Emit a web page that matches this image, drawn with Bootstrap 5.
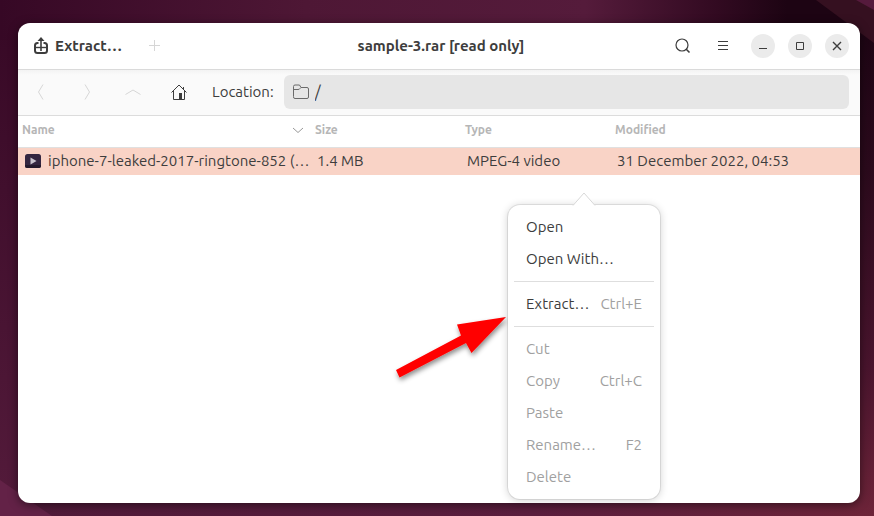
<!DOCTYPE html>
<html lang="en">
<head>
<meta charset="utf-8">
<meta name="viewport" content="width=device-width, initial-scale=1">
<title>sample-3.rar [read only]</title>
<link href="https://cdn.jsdelivr.net/npm/bootstrap@5.3.0/dist/css/bootstrap.min.css" rel="stylesheet">
<style>
body{font-family:Ubuntu,"Noto Sans","Open Sans",sans-serif;font-size:15px;line-height:20px;color:#3d3d3d;background:#3f1029}
.desktop{isolation:isolate;padding:23px 14px 13px 18px}
.wallpaper{z-index:-1}
.app-window{background:#fff;border-radius:12px;box-shadow:0 2px 10px rgba(0,0,0,.5)}
.title-bar{height:47px;border-bottom:1px solid #dadada;padding:0 11px 0 15px}
.title-bar h1{font-size:15px}
.side{flex:1 1 0}
.path-bar{height:46px;background:linear-gradient(#f3f3f3,#fafafa 5px);border-bottom:1px solid #dcdcdc;padding:0 11px 2px 0}
.tool{background:none;border:0;padding:0;color:inherit;display:flex;align-items:center;justify-content:center;flex:none}
.tool:disabled{color:#d6d6d6}
.tool-nav{width:46px;height:34px}
.tool-extract{gap:6px}
.tool-add{margin-left:27px}
.tool-menu{margin:0 22px 0 26px}
.rounds{gap:13px}
.tool-round{width:24px;height:24px;border-radius:50%;background:#ebebeb}
.place-label{margin:0 10px}
.location{background:#e6e6e6;border-radius:6px;height:34px;padding:0 9px;color:#6a6a6a;gap:6px}
.location input{background:none;border:0;outline:0;padding:0;color:#3d3d3d;min-width:0;font-size:16px}
.files{table-layout:fixed;width:100%}
.files th{height:31px;padding:0 4px 2px;font-size:12px;line-height:16px;font-weight:700;color:#b6b6b6;border-bottom:1px solid #e0e0e0}
.files td{height:28px;padding:0 6px;background:#f9d3c6;white-space:nowrap}
.file-name{gap:7px}
.col-file{width:293px}
.col-std{width:150px}
.menu-pop{left:508px;top:205px;width:152px;background:#fff;border-radius:12px;padding:6px;box-shadow:0 0 0 1px rgba(0,0,0,.08),0 1px 8px rgba(0,0,0,.2)}
.menu-tip{left:64px;top:-13px}
.entry{background:none;border:0;width:100%;height:32px;padding:0 12px;color:inherit;display:flex;align-items:center;justify-content:space-between;text-align:left}
.entry:disabled,.keys{color:#a0a0a0}
.menu-line{height:1px;background:#dedede;margin:6px 0}
.pointer{left:385px;top:305px}
</style>
<script src="https://cdn.jsdelivr.net/npm/bootstrap@5.3.0/dist/js/bootstrap.bundle.min.js"></script>
</head>
<body>
<div class="desktop position-relative min-vh-100 d-flex">
<svg class="wallpaper position-absolute top-0 start-0 w-100 h-100" viewBox="0 0 874 516" preserveAspectRatio="none" aria-hidden="true">
<defs>
<linearGradient id="base" x2="0" y2="1"><stop stop-color="#360825"/><stop offset="1" stop-color="#541b3b"/></linearGradient>
<linearGradient id="topband"><stop stop-color="#360825"/><stop offset=".35" stop-color="#4e1735"/><stop offset=".67" stop-color="#551b3b"/><stop offset=".82" stop-color="#320a21"/><stop offset=".9" stop-color="#1d0413"/></linearGradient>
<linearGradient id="lowband"><stop stop-color="#501a39"/><stop offset=".6" stop-color="#5b1e3e"/><stop offset="1" stop-color="#6d2439"/></linearGradient>
<linearGradient id="rightband" x2="0" y2="1"><stop stop-color="#1c0413"/><stop offset=".3" stop-color="#2b0a1c"/><stop offset=".7" stop-color="#49142d"/><stop offset="1" stop-color="#6d2439"/></linearGradient>
</defs>
<path fill="url(#base)" d="M0 0H874V516H0z"/>
<path fill="url(#topband)" d="M0 0H874V40H0z"/>
<path fill="url(#lowband)" d="M20 490H874V516H20z"/>
<path fill="url(#rightband)" d="M850 20H874V516H850z"/>
<path fill="#351020" d="M816 0H874V43z"/>
<path fill="#551a3c" d="M856 0H874V10z"/>
<path fill="#632247" d="M0 480L52 516H0z"/>
</svg>
<main class="app-window flex-grow-1">
<header class="title-bar d-flex align-items-center">
<div class="side d-flex align-items-center">
<button class="tool tool-extract fw-bold" type="button"><svg width="16" height="18" viewBox="0 0 16 18" fill="none" stroke="currentColor" stroke-width="2"><rect x="2" y="6" width="12" height="10" rx="2.500"/><path d="M5.500 6h5" stroke="#fff"/><path d="M8 3v11" stroke-width="1.600"/><path d="M3 10.500h10" stroke-width="1.400"/><path d="M8 0l3.500 4h-7z" fill="currentColor" stroke="none"/></svg><span>Extract…</span></button>
<button class="tool tool-add" type="button" disabled aria-label="Add files"><svg width="12" height="12" viewBox="0 0 12 12" fill="none" stroke="currentColor"><path d="M5.500 0v11M0 5.500h11"/></svg></button>
</div>
<h1 class="m-0 fw-bold">sample-3.rar [read only]</h1>
<div class="side d-flex align-items-center justify-content-end">
<button class="tool" type="button" aria-label="Search"><svg width="16" height="16" viewBox="0 0 16 16" fill="none" stroke="currentColor" stroke-width="1.200"><circle cx="7" cy="7" r="6"/><path d="M11 11l3.500 3.500" stroke-width="1.600"/></svg></button>
<button class="tool tool-menu" type="button" aria-label="Menu"><svg width="12" height="12" viewBox="0 0 12 12" fill="none" stroke="currentColor"><path d="M1 1.500h10M1 5.500h10M1 9.500h10"/></svg></button>
<div class="rounds d-flex">
<button class="tool tool-round" type="button" aria-label="Minimise"><svg width="10" height="10" viewBox="0 0 10 10" stroke="currentColor"><path d="M1 7.500h8"/></svg></button>
<button class="tool tool-round" type="button" aria-label="Maximise"><svg width="10" height="10" viewBox="0 0 10 10" fill="none" stroke="currentColor"><path d="M1.500 1.500h7v7h-7z"/></svg></button>
<button class="tool tool-round" type="button" aria-label="Close"><svg width="10" height="10" viewBox="0 0 10 10" stroke="currentColor" stroke-width="1.400"><path d="M1 1l8 8M9 1l-8 8"/></svg></button>
</div>
</div>
</header>
<nav class="path-bar d-flex align-items-center" aria-label="Location">
<button class="tool tool-nav" type="button" disabled aria-label="Back"><svg width="8" height="16" viewBox="0 0 8 16" fill="none" stroke="currentColor"><path d="M6 .500L1.500 8 6 15.500"/></svg></button>
<button class="tool tool-nav" type="button" disabled aria-label="Forward"><svg width="8" height="16" viewBox="0 0 8 16" fill="none" stroke="currentColor"><path d="M2 .500L6.500 8 2 15.500"/></svg></button>
<button class="tool tool-nav" type="button" disabled aria-label="Up"><svg width="16" height="8" viewBox="0 0 16 8" fill="none" stroke="currentColor"><path d="M.500 6.500L8 2l7.500 4.500"/></svg></button>
<button class="tool tool-nav" type="button" aria-label="Home"><svg width="16" height="16" viewBox="0 0 16 16" fill="none" stroke="currentColor"><path d="M.500 8.500L8 1l7.500 7.500M2.500 7v8.500h11V7M12.500 5V3"/><path d="M8 9h3v6.500H8z" fill="currentColor" stroke="none"/></svg></button>
<label class="place-label" for="place">Location:</label>
<div class="location d-flex align-items-center flex-grow-1"><svg width="16" height="16" viewBox="0 0 16 16" fill="none" stroke="currentColor"><path d="M.500 12.500v-10a1.500 1.500 0 0 1 1.500-1.500h4.500l1.500 2.500h6a1.500 1.500 0 0 1 1.500 1.500v8a1.500 1.500 0 0 1-1.500 1.500h-12a1.500 1.500 0 0 1-1.500-1.500zM.500 5.500h4.500q1.500 0 2-1l1-1"/></svg><input class="flex-grow-1" id="place" type="text" value="/"></div>
</nav>
<table class="files">
<colgroup><col class="col-file"><col class="col-std"><col class="col-std"><col></colgroup>
<thead><tr><th scope="col"><div class="d-flex align-items-center justify-content-between">Name<svg width="18" height="8" viewBox="0 0 18 8" fill="none" stroke="#999"><path d="M4 2l5 4.500L14 2"/></svg></div></th><th scope="col">Size</th><th scope="col">Type</th><th scope="col">Modified</th></tr></thead>
<tbody><tr><td><div class="file-name d-flex align-items-center"><svg class="flex-shrink-0" width="17" height="16" viewBox="0 0 17 16"><rect x="1" y="1" width="16" height="14" rx="2.500" fill="#342640"/><path d="M1 12h16v1q0 2-2 2H3q-2 0-2-2z" fill="#241a2c"/><path d="M6.500 4.500v7l6-3.500z" fill="#c9c4cd"/></svg><span>iphone-7-leaked-2017-ringtone-852 (…</span></div></td><td>1.4 MB</td><td>MPEG-4 video</td><td>31 December 2022, 04:53</td></tr></tbody>
</table>
</main>
<svg class="pointer position-absolute" width="130" height="85" viewBox="385 305 130 85" aria-hidden="true"><defs><filter id="soft" x="-20%" y="-20%" width="140%" height="150%"><feDropShadow dx="1" dy="3" stdDeviation="2.500" flood-opacity=".45"/></filter></defs><path fill="#f00" filter="url(#soft)" d="M396 370L461 335.500 457 324.500 506 317 471.500 353 466 343 399.500 377.500z"/></svg>
<div class="menu-pop position-absolute">
<svg class="menu-tip position-absolute" width="24" height="14" viewBox="0 0 24 14" aria-hidden="true"><path d="M1 13.500L12 1l11 12.500" fill="#fff" stroke="#d8d8d8"/></svg>
<button class="entry" type="button">Open</button>
<button class="entry" type="button">Open With…</button>
<div class="menu-line"></div>
<button class="entry" type="button">Extract…<span class="keys">Ctrl+E</span></button>
<div class="menu-line"></div>
<button class="entry" type="button" disabled>Cut</button>
<button class="entry" type="button" disabled>Copy<span class="keys">Ctrl+C</span></button>
<button class="entry" type="button" disabled>Paste</button>
<button class="entry" type="button" disabled>Rename…<span class="keys">F2</span></button>
<button class="entry" type="button" disabled>Delete</button>
</div>
</div>
</body>
</html>
